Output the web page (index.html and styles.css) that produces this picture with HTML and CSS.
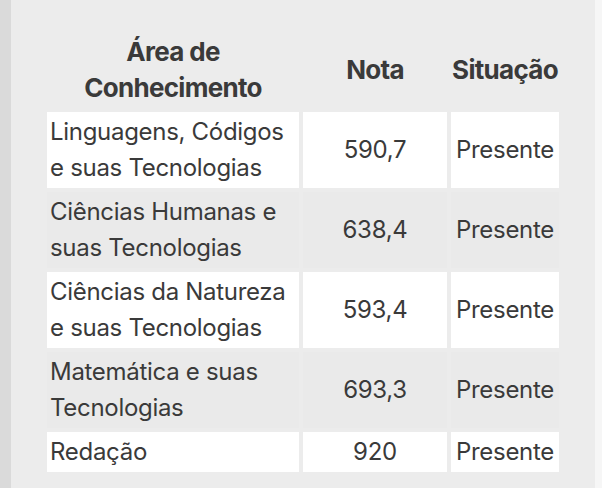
FILE: index.html
```html
<!DOCTYPE html>
<html lang="pt">
<head>
<meta charset="utf-8">
<link rel="stylesheet" href="styles.css">
</head>
<body>
<div class="page">
  <div class="strip-left"></div>
  <main class="main">
    <table class="grades">
      <colgroup>
        <col class="c1"><col class="c2"><col class="c3">
      </colgroup>
      <thead>
        <tr><th>Área de<br>Conhecimento</th><th>Nota</th><th>Situação</th></tr>
      </thead>
      <tbody>
        <tr class="odd"><td class="area">Linguagens, Códigos<br>e suas Tecnologias</td><td>590,7</td><td>Presente</td></tr>
        <tr class="even"><td class="area">Ciências Humanas e<br>suas Tecnologias</td><td>638,4</td><td>Presente</td></tr>
        <tr class="odd"><td class="area">Ciências da Natureza<br>e suas Tecnologias</td><td>593,4</td><td>Presente</td></tr>
        <tr class="even"><td class="area">Matemática e suas<br>Tecnologias</td><td>693,3</td><td>Presente</td></tr>
        <tr class="odd"><td class="area">Redação</td><td>920</td><td>Presente</td></tr>
      </tbody>
    </table>
  </main>
  <div class="strip-right"></div>
</div>
</body>
</html>
```
FILE: styles.css
```css
html, body {
  margin: 0;
  padding: 0;
  height: 100%;
}
body {
  font-family: Inter, "Liberation Sans", sans-serif;
  color: #3a3a3a;
}
.page {
  display: flex;
  height: 488px;
}
.strip-left {
  width: 11px;
  background: #dadada;
}
.strip-right {
  width: 7px;
  background: #f6f6f6;
}
.main {
  flex: 1;
  background: #ececec;
  display: flex;
  justify-content: center;
  align-items: flex-start;
}
.grades {
  border-collapse: separate;
  border-spacing: 4px;
  margin-top: 28px;
  font-size: 24px;
  line-height: 36px;
  letter-spacing: -0.3px;
}
.c1 { width: 252px; }
.c2 { width: 144px; }
.c3 { width: 108px; }
.grades th, .grades td {
  box-sizing: border-box;
  padding: 2px 3px;
  text-align: center;
  vertical-align: middle;
  white-space: nowrap;
}
.grades th {
  padding: 2px 0;
  font-size: 26px;
  font-weight: 700;
  letter-spacing: -0.7px;
}
.grades td.area {
  text-align: left;
}
.odd td {
  background: #ffffff;
}
.even td {
  background: #eaeaea;
}
```
